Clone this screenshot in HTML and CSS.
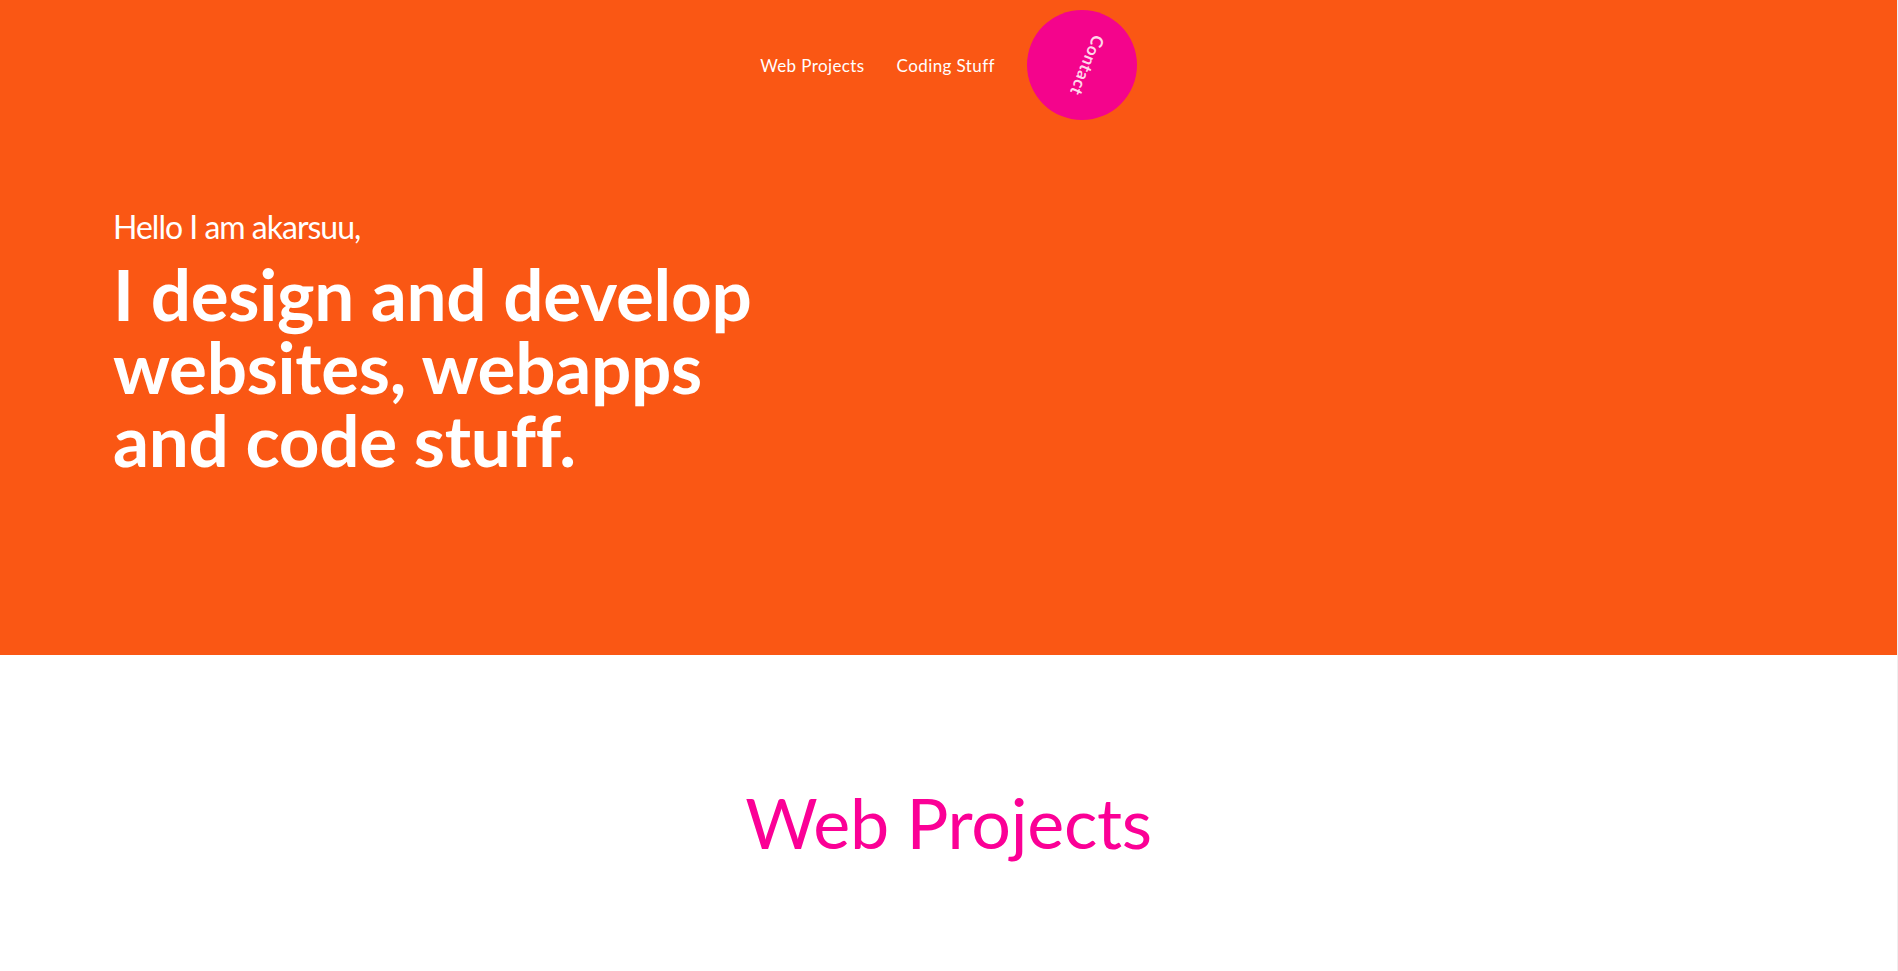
FILE: index.html
```html
<!DOCTYPE html>
<html lang="en">
<head>
<meta charset="utf-8">
<title>akarsuu</title>
<link rel="stylesheet" href="styles.css">
</head>
<body>
<header class="hero">
  <nav class="nav">
    <a class="nav-link" href="#web">Web Projects</a>
    <a class="nav-link" href="#code">Coding Stuff</a>
    <a class="contact" href="#contact"><span class="contact-text">Contact</span></a>
  </nav>
  <div class="intro">
    <p class="hello">Hello I am akarsuu,</p>
    <h1 class="headline">I design and develop<br>websites, webapps<br>and code stuff.</h1>
  </div>
</header>
<main>
  <section class="projects" id="web">
    <h2 class="section-title">Web Projects</h2>
  </section>
</main>
</body>
</html>
```

FILE: styles.css
```css
html {
  background: #efefef;
}
body {
  margin: 0 1px 0 0;
  background: #ffffff;
  font-family: "Lato", "Noto Sans", sans-serif;
  min-height: 971px;
}
.hero {
  background: #fa5714;
  height: 655px;
  box-sizing: border-box;
  padding-top: 10px;
}
.nav {
  display: flex;
  justify-content: center;
  align-items: center;
  gap: 32px;
}
.nav-link {
  color: #ffffff;
  text-decoration: none;
  font-size: 17px;
  letter-spacing: 0.4px;
}
.contact {
  width: 110px;
  height: 110px;
  border-radius: 50%;
  background: #f4048c;
  display: flex;
  align-items: center;
  justify-content: center;
  text-decoration: none;
}
.contact-text {
  display: block;
  color: #ffd6ea;
  font-size: 17px;
  font-weight: 700;
  transform: translateX(6px) rotate(112deg);
  letter-spacing: 0.5px;
}
.intro {
  padding: 87px 0 0 113px;
  color: #ffffff;
}
.hello {
  margin: 0;
  font-size: 32px;
  letter-spacing: -1px;
  line-height: 40px;
}
.headline {
  margin: 10px 0 0;
  font-size: 71px;
  font-weight: 700;
  line-height: 73px;
  letter-spacing: -0.3px;
}
.projects {
  padding-top: 125px;
  text-align: center;
}
.section-title {
  margin: 0;
  font-size: 70px;
  font-weight: 400;
  color: #fb0096;
  letter-spacing: -0.3px;
}
```
